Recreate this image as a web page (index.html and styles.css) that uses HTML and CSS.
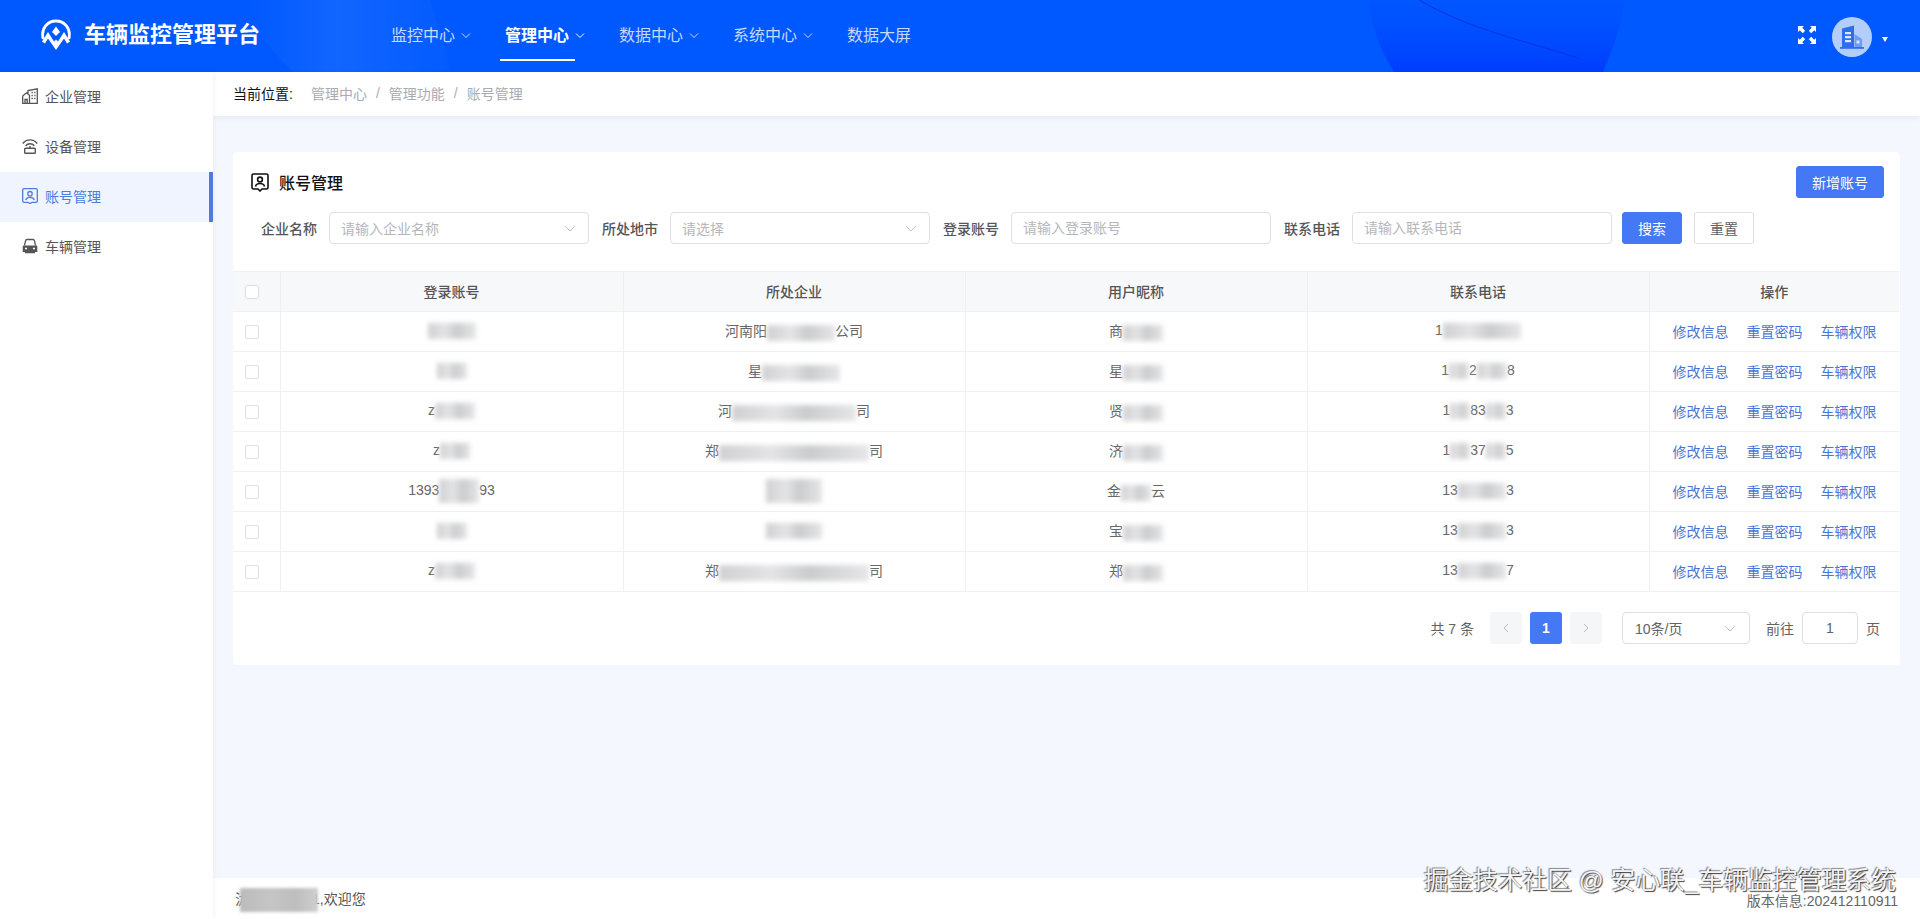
FILE: index.html
```html
<!DOCTYPE html>
<html lang="zh-CN">
<head>
<meta charset="utf-8">
<title>账号管理</title>
<link rel="stylesheet" href="styles.css">
</head>
<body>
<div class="app">
  <header class="topbar">
    <svg class="topbar-art" width="1920" height="72" viewBox="0 0 1920 72" aria-hidden="true">
      <defs>
        <linearGradient id="band" x1="0" y1="0" x2="1" y2="0">
          <stop offset="0" stop-color="#3f84ff" stop-opacity="0"/>
          <stop offset=".45" stop-color="#3f84ff" stop-opacity=".28"/>
          <stop offset="1" stop-color="#3f84ff" stop-opacity=".05"/>
        </linearGradient>
        <linearGradient id="dark" x1="0" y1="0" x2="0" y2="1">
          <stop offset="0" stop-color="#0050ff" stop-opacity=".35"/>
          <stop offset="1" stop-color="#0038ff" stop-opacity=".85"/>
        </linearGradient>
      </defs>
      <path d="M245 0H430C438 25 446 50 451 72H293C270 50 250 25 245 0Z" fill="url(#band)"/>
      <path d="M1369 0H1625C1622 25 1612 50 1603 72H1394C1380 50 1371 25 1369 0Z" fill="url(#dark)"/>
      <path d="M1419 0C1470 30 1530 42 1578 58" fill="none" stroke="#0a32e8" stroke-width="1"/>
    </svg>
    <div class="brand">
      <svg class="brand-logo" width="32" height="32" viewBox="0 0 32 32" aria-hidden="true">
        <path d="M3.200 20C.5 9 8 2 16 2S31.500 9 28.800 20" fill="none" stroke="#fff" stroke-width="2.800"/>
        <path d="M8 13 14 22.500 16 20.500 18 22.500 24 13 30 22.500 27 24.500 24 19.500 16 31 8 19.500 5 24.500 2 22.500Z" fill="#fff"/>
        <path d="M16 7.500 20 13 16 17 12 13Z" fill="#fff"/>
      </svg>
      <span class="brand-name">车辆监控管理平台</span>
    </div>
    <nav class="nav">
      <a class="nav-item">监控中心<svg class="nav-chev" width="12" height="12" viewBox="0 0 12 12"><path d="M2 4.500 6 8.500 10 4.500" fill="none" stroke="currentColor"/></svg></a>
      <a class="nav-item is-active">管理中心<svg class="nav-chev" width="12" height="12" viewBox="0 0 12 12"><path d="M2 4.500 6 8.500 10 4.500" fill="none" stroke="currentColor"/></svg></a>
      <a class="nav-item">数据中心<svg class="nav-chev" width="12" height="12" viewBox="0 0 12 12"><path d="M2 4.500 6 8.500 10 4.500" fill="none" stroke="currentColor"/></svg></a>
      <a class="nav-item">系统中心<svg class="nav-chev" width="12" height="12" viewBox="0 0 12 12"><path d="M2 4.500 6 8.500 10 4.500" fill="none" stroke="currentColor"/></svg></a>
      <a class="nav-item">数据大屏</a>
    </nav>
    <div class="top-tools">
      <svg width="20" height="20" viewBox="0 0 20 20" aria-hidden="true" class="full-icon">
        <path d="M1 1h6L5.200 2.800 8.200 5.800 5.800 8.200 2.800 5.200 1 7zM19 1v6L17.200 5.200 14.200 8.200 11.800 5.800 14.800 2.800 13 1zM1 19v-6l1.800 1.800 3-3 2.400 2.400-3 3L7 19zM19 19h-6l1.800-1.800-3-3 2.400-2.400 3 3L19 13z" fill="#fff"/>
      </svg>
      <div class="avatar">
        <svg width="26" height="26" viewBox="0 0 26 26" aria-hidden="true">
          <path d="M3 4.500 15 1.500V23H3z" fill="#2f6df0"/>
          <path d="M15.500 10 23 15V23H15.500z" fill="#6f9bf5"/>
          <path d="M6 8h6v2.200H6zM6 12h6v2.200H6zM6 16h6v2.200H6z" fill="#dbe7ff"/>
          <rect x="17.500" y="16.500" width="3" height="3" fill="#dbe7ff"/>
          <rect x="1" y="23" width="24" height="1.800" fill="#2f6df0"/>
        </svg>
      </div>
      <span class="caret"></span>
    </div>
  </header>

  <div class="body">
    <aside class="side">
      <a class="side-item">
        <svg class="side-icon" width="16" height="16" viewBox="0 0 16 16" fill="none" stroke="currentColor" stroke-width="1.300"><path d="M.7 15.300V8L4.500 4.800 7.500 7.300V15.300zM6 5.500V2.500L15.300 .8V15.300H.7M3 15V11.500H5.200V15"/><path d="M9.500 4.500h1.300M12.300 4.500h1.200M9.500 7.500h1.300M12.300 7.500h1.200M9.500 10.500h1.300M12.300 10.500h1.200"/></svg>
        <span>企业管理</span>
      </a>
      <a class="side-item">
        <svg class="side-icon" width="16" height="16" viewBox="0 0 16 16" fill="none" stroke="currentColor" stroke-width="1.400"><path d="M.8 5.500C4.300 .6 11.700 .6 15.200 5.500M3.600 7.800C6 5 10 5 12.400 7.800"/><path d="M8 8v2.500"/><rect x="2.700" y="10.300" width="10.600" height="5" rx=".8"/></svg>
        <span>设备管理</span>
      </a>
      <a class="side-item is-active">
        <svg class="side-icon" width="16" height="16" viewBox="0 0 16 16" fill="none" stroke="currentColor" stroke-width="1.300"><path d="M2 .7h12A1.300 1.300 0 0 1 15.300 2v11A1.300 1.300 0 0 1 14 14.300H10L8 15.800 6 14.300H2A1.300 1.300 0 0 1 .7 13V2A1.300 1.300 0 0 1 2 .7z"/><circle cx="8" cy="5.700" r="2.200"/><path d="M3.800 12C4.300 9.800 6 9.300 8 9.300S11.700 9.800 12.200 12"/></svg>
        <span>账号管理</span>
      </a>
      <a class="side-item">
        <svg class="side-icon" width="16" height="16" viewBox="0 0 16 16" aria-hidden="true"><path d="M2.500 7.500 3.500 2.800C3.700 2 4.300 1.500 5 1.500h6c.7 0 1.300.5 1.500 1.300l1 4.700" fill="none" stroke="currentColor" stroke-width="1.300"/><path d="M1.700 7.500h12.600c.5 0 1 .5 1 1v5.500h-2.300v1.300H2.900V14H.7V8.500c0-.5.500-1 1-1zM3 9.800v1.400h2V9.800zM11 9.800v1.400h2V9.800z" fill="currentColor" fill-rule="evenodd"/></svg>
        <span>车辆管理</span>
      </a>
    </aside>

    <main class="main">
      <div class="crumbs">
        <strong class="crumb-label">当前位置:</strong>
        <span>管理中心</span><i>/</i><span>管理功能</span><i>/</i><span>账号管理</span>
      </div>

      <div class="content">
        <section class="card">
          <div class="card-head">
            <h2 class="card-title">
              <svg width="18" height="19" viewBox="0 0 18 19" fill="none" stroke="#111" stroke-width="1.600"><path d="M2.500 1h13a1.500 1.500 0 0 1 1.500 1.500v12a1.500 1.500 0 0 1-1.500 1.500H11L9 18 7 16H2.500A1.500 1.500 0 0 1 1 14.500v-12A1.500 1.500 0 0 1 2.500 1z"/><circle cx="9" cy="6.500" r="2.400"/><path d="M4.500 13.500C5 11 7 10.500 9 10.500S13 11 13.500 13.500"/></svg>
              账号管理
            </h2>
            <button class="btn btn-primary btn-wide">新增账号</button>
          </div>

          <div class="filters">
            <label class="f-label">企业名称</label>
            <div class="f-select"><span class="ph">请输入企业名称</span><svg class="chev" width="14" height="14" viewBox="0 0 14 14"><path d="M2 5 7 10 12 5" fill="none" stroke="#c0c4cc"/></svg></div>
            <label class="f-label">所处地市</label>
            <div class="f-select"><span class="ph">请选择</span><svg class="chev" width="14" height="14" viewBox="0 0 14 14"><path d="M2 5 7 10 12 5" fill="none" stroke="#c0c4cc"/></svg></div>
            <label class="f-label">登录账号</label>
            <input class="f-input" placeholder="请输入登录账号">
            <label class="f-label">联系电话</label>
            <input class="f-input" placeholder="请输入联系电话">
            <button class="btn btn-primary btn-search">搜索</button>
            <button class="btn btn-plain">重置</button>
          </div>

          <table class="grid">
            <colgroup><col class="c-check"><col class="c-first"><col class="c-data"><col class="c-data"><col class="c-data"><col class="c-ops"></colgroup>
            <thead>
              <tr><th><span class="check"></span></th><th>登录账号</th><th>所处企业</th><th>用户昵称</th><th>联系电话</th><th>操作</th></tr>
            </thead>
            <tbody>
              <tr>
                <td><span class="check"></span></td>
                <td><b class="mask m48"></b></td>
                <td>河南阳<b class="mask m68"></b>公司</td>
                <td>商<b class="mask m40"></b></td>
                <td>1<b class="mask m78"></b></td>
                <td class="ops"><a>修改信息</a><a>重置密码</a><a>车辆权限</a></td>
              </tr>
              <tr>
                <td><span class="check"></span></td>
                <td><b class="mask m30"></b></td>
                <td>星<b class="mask m78"></b></td>
                <td>星<b class="mask m40"></b></td>
                <td>1<b class="mask m20"></b>2<b class="mask m30"></b>8</td>
                <td class="ops"><a>修改信息</a><a>重置密码</a><a>车辆权限</a></td>
              </tr>
              <tr>
                <td><span class="check"></span></td>
                <td>z<b class="mask m40"></b></td>
                <td>河<b class="mask m124"></b>司</td>
                <td>贤<b class="mask m40"></b></td>
                <td>1<b class="mask m20"></b>83<b class="mask m20"></b>3</td>
                <td class="ops"><a>修改信息</a><a>重置密码</a><a>车辆权限</a></td>
              </tr>
              <tr>
                <td><span class="check"></span></td>
                <td>z<b class="mask m30"></b></td>
                <td>郑<b class="mask m150"></b>司</td>
                <td>济<b class="mask m40"></b></td>
                <td>1<b class="mask m20"></b>37<b class="mask m20"></b>5</td>
                <td class="ops"><a>修改信息</a><a>重置密码</a><a>车辆权限</a></td>
              </tr>
              <tr>
                <td><span class="check"></span></td>
                <td>1393<b class="mask m40 tall"></b>93</td>
                <td><b class="mask m56 tall"></b></td>
                <td>金<b class="mask m30"></b>云</td>
                <td>13<b class="mask m48"></b>3</td>
                <td class="ops"><a>修改信息</a><a>重置密码</a><a>车辆权限</a></td>
              </tr>
              <tr>
                <td><span class="check"></span></td>
                <td><b class="mask m30"></b></td>
                <td><b class="mask m56"></b></td>
                <td>宝<b class="mask m40"></b></td>
                <td>13<b class="mask m48"></b>3</td>
                <td class="ops"><a>修改信息</a><a>重置密码</a><a>车辆权限</a></td>
              </tr>
              <tr>
                <td><span class="check"></span></td>
                <td>z<b class="mask m40"></b></td>
                <td>郑<b class="mask m150"></b>司</td>
                <td>郑<b class="mask m40"></b></td>
                <td>13<b class="mask m48"></b>7</td>
                <td class="ops"><a>修改信息</a><a>重置密码</a><a>车辆权限</a></td>
              </tr>
            </tbody>
          </table>

          <div class="pager">
            <span class="p-total">共 7 条</span>
            <span class="p-btn"><svg width="12" height="12" viewBox="0 0 12 12"><path d="M8 2 4 6 8 10" fill="none" stroke="#b4b8bf"/></svg></span>
            <span class="p-btn p-current">1</span>
            <span class="p-btn"><svg width="12" height="12" viewBox="0 0 12 12"><path d="M4 2 8 6 4 10" fill="none" stroke="#b4b8bf"/></svg></span>
            <div class="p-size"><span>10条/页</span><svg width="14" height="14" viewBox="0 0 14 14"><path d="M2 5 7 10 12 5" fill="none" stroke="#c0c4cc"/></svg></div>
            <span class="p-text p-goto">前往</span>
            <span class="p-jump">1</span>
            <span class="p-text">页</span>
          </div>
        </section>
      </div>

      <footer class="foot">
        <span class="foot-user">泷<b class="mask foot-mask"></b>1,欢迎您</span>
        <span class="foot-ver">版本信息:202412110911</span>
      </footer>
    </main>
  </div>
  <div class="watermark">掘金技术社区 @ 安心联_车辆监控管理系统</div>
</div>
</body>
</html>
```

FILE: styles.css
```css
* { box-sizing: border-box; }
html, body { margin: 0; height: 100%; overflow: hidden; }
body {
  font-family: "Liberation Sans", "Noto Sans CJK SC", sans-serif;
  font-size: 14px;
  color: #606266;
  background: #f4f7fe;
}
a { text-decoration: none; color: inherit; }
.app { position: relative; height: 919px; display: flex; flex-direction: column; }

/* top bar */
.topbar {
  position: relative;
  flex: 0 0 72px;
  display: flex;
  align-items: center;
  background: #0059ff;
  color: #fff;
  overflow: hidden;
}
.topbar-art { position: absolute; left: 0; top: 0; }
.brand { position: relative; display: flex; align-items: center; gap: 12px; margin-left: 40px; width: 360px; padding-bottom: 2px; }
.brand-logo { flex: none; }
.brand-name { font-size: 22px; font-weight: 700; line-height: 30px; white-space: nowrap; }
.nav { position: relative; display: flex; align-items: stretch; height: 72px; margin-left: -14px; }
.nav-item {
  position: relative;
  display: flex;
  align-items: center;
  height: 72px;
  padding: 0 23px 5px 5px;
  margin-right: 5px;
  font-size: 16px;
  color: rgba(255, 255, 255, .78);
  white-space: nowrap;
}
.nav-chev { margin-left: 5px; margin-top: 3px; }
.nav-item.is-active { color: #fff; font-weight: 700; }
.nav-item.is-active::after {
  content: "";
  position: absolute;
  left: 0;
  bottom: 11px;
  width: 75px;
  height: 2px;
  background: #fff;
}
.top-tools { position: relative; display: flex; align-items: center; margin-left: auto; padding-right: 32px; }
.full-icon { margin-right: 15px; margin-top: -2px; }
.avatar {
  width: 40px;
  height: 40px;
  border-radius: 50%;
  background: #b3cefb;
  display: flex;
  align-items: center;
  justify-content: center;
  margin-top: 2px;
}
.caret {
  margin-left: 10px;
  margin-top: 6px;
  border-left: 3.500px solid transparent;
  border-right: 3.500px solid transparent;
  border-top: 5px solid #fff;
}

/* body */
.body { flex: 1; min-height: 0; display: flex; }
.side {
  flex: 0 0 213px;
  background: #fff;
  box-shadow: 1px 0 4px rgba(0, 0, 0, .05);
  position: relative;
  z-index: 2;
}
.side-item {
  display: flex;
  align-items: center;
  gap: 7px;
  height: 50px;
  padding: 0 0 2px 22px;
  color: #555;
}
.side-icon { flex: none; }
.side-item.is-active {
  color: #4d7cdc;
  background: #f0f4fe;
  border-right: 4px solid #4d7cdc;
}

.main { flex: 1; min-width: 0; display: flex; flex-direction: column; }
.crumbs {
  flex: 0 0 44px;
  display: flex;
  align-items: center;
  gap: 9px;
  padding: 0 0 3px 20px;
  background: #fff;
  box-shadow: 0 2px 6px rgba(0, 0, 0, .06);
  color: #a8abb2;
  position: relative;
}
.crumb-label { font-weight: 400; color: #111; margin-right: 9px; }
.crumbs i { font-style: normal; }

.content { flex: 1; min-height: 0; padding: 36px 20px 0; }
.card { background: #fff; border-radius: 4px; padding-bottom: 21px; }
.card-head {
  display: flex;
  align-items: center;
  justify-content: space-between;
  padding: 14px 16px 0 18px;
  height: 46px;
}
.card-title {
  display: flex;
  align-items: center;
  gap: 10px;
  margin: 0;
  font-size: 16px;
  font-weight: 500;
  color: #111;
}
.btn {
  height: 32px;
  border-radius: 3px;
  font: inherit;
  border: 1px solid #dcdfe6;
  padding: 0;
  background: #fff;
  color: #606266;
}
.btn-primary { background: #4478f4; border-color: #4478f4; color: #fff; }
.btn-wide { width: 88px; }
.btn-search { width: 60px; margin-left: 10px; }
.btn-plain { width: 60px; margin-left: 12px; }

.filters { display: flex; align-items: center; margin-top: 14px; padding-left: 28px; }
.f-label { width: 56px; margin-right: 12px; color: #555; font-weight: 500; font-size: 14px; white-space: nowrap; }
.f-select, .f-input {
  width: 260px;
  height: 32px;
  border: 1px solid #dcdfe6;
  border-radius: 4px;
  background: #fff;
  margin-right: 13px;
  padding: 0 11px;
  font: inherit;
  outline: none;
}
.f-input:last-of-type { margin-right: 0; }
.f-input::placeholder { color: #b4b7bd; }
.f-select { display: flex; align-items: center; justify-content: space-between; }
.ph { color: #b4b7bd; }

.grid { width: 1666px; margin-top: 27px; border-collapse: collapse; table-layout: fixed; }
.c-check { width: 47px; }
.c-first { width: 343px; }
.c-data { width: 342px; }
.c-ops { width: 250px; }
.grid th, .grid td {
  height: 40px;
  padding: 0 0 2px;
  border: 1px solid #eef0f4;
  text-align: center;
  font-size: 14px;
  white-space: nowrap;
}
.grid th { background: #f7f8fa; color: #555; font-weight: 500; }
.grid td { color: #666; }
.grid tbody td:first-child, .grid th:first-child { text-align: left; padding: 0 0 0 12px; }
.grid tr > *:first-child { border-left: none; }
.grid tr > *:last-child { border-right: none; }
.check {
  display: block;
  width: 14px;
  height: 14px;
  border: 1px solid #dcdfe6;
  border-radius: 2px;
  background: #fff;
}
.grid .ops { color: #4d74d5; text-align: left; padding-left: 23px; padding-bottom: 1px; }
.ops a { margin-right: 18px; }
.ops a:last-child { margin-right: 0; }

.mask {
  display: inline-block;
  height: 16px;
  vertical-align: middle;
  background: linear-gradient(90deg, #d0d0d3, #e4e4e6 35%, #cbccce 60%, #e6e6e8);
  filter: blur(2.500px);
}
.mask.tall { height: 24px; }
.m20 { width: 20px; }
.m30 { width: 30px; }
.m40 { width: 40px; }
.m48 { width: 48px; }
.m56 { width: 56px; }
.m68 { width: 68px; }
.m78 { width: 78px; }
.m124 { width: 124px; }
.m150 { width: 150px; }

.pager { display: flex; align-items: center; justify-content: flex-end; margin-top: 20px; padding-right: 20px; height: 32px; }
.p-total { margin-right: 16px; white-space: nowrap; }
.p-btn {
  width: 32px;
  height: 32px;
  border-radius: 3px;
  background: #f5f6f8;
  display: flex;
  align-items: center;
  justify-content: center;
  margin-right: 8px;
}
.p-current { background: #4478f4; color: #fff; font-weight: 700; }
.p-btn + .p-size { margin-left: 12px; }
.p-size {
  width: 128px;
  height: 32px;
  border: 1px solid #dcdfe6;
  border-radius: 4px;
  display: flex;
  align-items: center;
  justify-content: space-between;
  padding: 0 12px;
}
.p-goto { margin-left: 16px; }
.p-text { white-space: nowrap; }
.p-jump {
  width: 56px;
  height: 32px;
  margin: 0 8px;
  border: 1px solid #dcdfe6;
  border-radius: 4px;
  display: flex;
  align-items: center;
  justify-content: center;
}

.foot {
  flex: 0 0 41px;
  display: flex;
  align-items: center;
  justify-content: space-between;
  padding: 3px 22px 0 22px;
  background: #fff;
  color: #666;
}
.foot-user { color: #555; white-space: nowrap; }
.mask.foot-mask { width: 78px; height: 24px; margin: 0 -6px 0 -9px; filter: blur(1.500px); background: linear-gradient(90deg, #bbb, #c6c6c6 40%, #bdbdbd 70%, #cfcfcf); vertical-align: middle; position: relative; }

.watermark {
  position: absolute;
  right: 24px;
  top: 866px;
  font-size: 24.700px;
  line-height: 30px;
  white-space: nowrap;
  color: #f4f4f4;
  text-shadow: 1px 1px 1px rgba(0, 0, 0, .75), -1px -1px 1px rgba(0, 0, 0, .45);
}
```
